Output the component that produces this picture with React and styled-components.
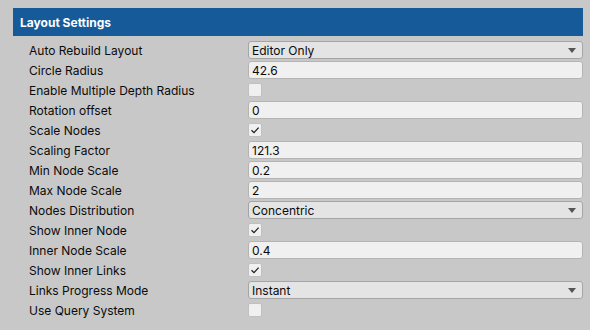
import React from 'react';
import styled, { createGlobalStyle } from 'styled-components';

const GlobalStyle = createGlobalStyle`
    body {
        margin:0;
        background:#c8c8c8;
        font-family: Inter, "Noto Sans", sans-serif;
    }
`;

const Panel = styled.div`
    width:590px;
    height:330px;
    padding:8px 7px 0 13px;
    box-sizing:border-box;
    background:#c8c8c8;
`;

const Header = styled.div`
    height:28px;
    background:#165a9a;
    color:#fff;
    font-size:12px;
    font-weight:700;
    display:flex;
    align-items:center;
    padding:1px 0 0 7px;
    box-sizing:border-box;
`;

const Rows = styled.div`
    display:flex;
    flex-direction:column;
    padding:4px 0 0 16px;
`;

const Row = styled.div`
    height:20px;
    display:grid;
    grid-template-columns: 219px 1fr;
    align-items:center;
`;

const Label = styled.span`
    font-size:12px;
    color:#0b0b0b;
    white-space:nowrap;
`;

const Field = styled.div`
    height:18px;
    box-sizing:border-box;
    border:1px solid ${p => p.$dropdown ? '#a5a5a5' : '#b4b4b4'};
    border-radius:3px;
    background:${p => p.$dropdown ? '#e4e4e4' : '#f0f0f0'};
    display:flex;
    align-items:center;
    justify-content:space-between;
    padding:0 6px 0 3px;
    font-size:12px;
    color:#0b0b0b;
`;

const Check = styled.div`
    width:14px;
    height:14px;
    box-sizing:border-box;
    border:1px solid #c0c0c0;
    border-radius:2px;
    background:#f0f0f0;
    display:flex;
    align-items:center;
    justify-content:center;
`;

const Arrow = styled.span`
    width:0;
    height:0;
    border-left:4px solid transparent;
    border-right:4px solid transparent;
    border-top:5px solid #555;
`;

const rows = [
    { label: 'Auto Rebuild Layout', kind: 'dropdown', value: 'Editor Only' },
    { label: 'Circle Radius', kind: 'text', value: '42.6' },
    { label: 'Enable Multiple Depth Radius', kind: 'check', value: false },
    { label: 'Rotation offset', kind: 'text', value: '0' },
    { label: 'Scale Nodes', kind: 'check', value: true },
    { label: 'Scaling Factor', kind: 'text', value: '121.3' },
    { label: 'Min Node Scale', kind: 'text', value: '0.2' },
    { label: 'Max Node Scale', kind: 'text', value: '2' },
    { label: 'Nodes Distribution', kind: 'dropdown', value: 'Concentric' },
    { label: 'Show Inner Node', kind: 'check', value: true },
    { label: 'Inner Node Scale', kind: 'text', value: '0.4' },
    { label: 'Show Inner Links', kind: 'check', value: true },
    { label: 'Links Progress Mode', kind: 'dropdown', value: 'Instant' },
    { label: 'Use Query System', kind: 'check', value: false },
];

const Tick = () => (
    <svg width="10" height="10" viewBox="0 0 10 10">
        <path d="M1.5 5.2 L4 7.6 L8.6 2.6" fill="none" stroke="#222" strokeWidth="1.3" />
    </svg>
);

const Control = ({ kind, value }) => {
    if (kind === 'check') return <Check>{value && <Tick />}</Check>;
    if (kind === 'dropdown') return <Field $dropdown>{value}<Arrow /></Field>;
    return <Field>{value}</Field>;
};

export default function App() {
    return (
        <>
            <GlobalStyle />
            <Panel>
                <Header>Layout Settings</Header>
                <Rows>
                    {rows.map(r => (
                        <Row key={r.label}>
                            <Label>{r.label}</Label>
                            <Control kind={r.kind} value={r.value} />
                        </Row>
                    ))}
                </Rows>
            </Panel>
        </>
    );
}
